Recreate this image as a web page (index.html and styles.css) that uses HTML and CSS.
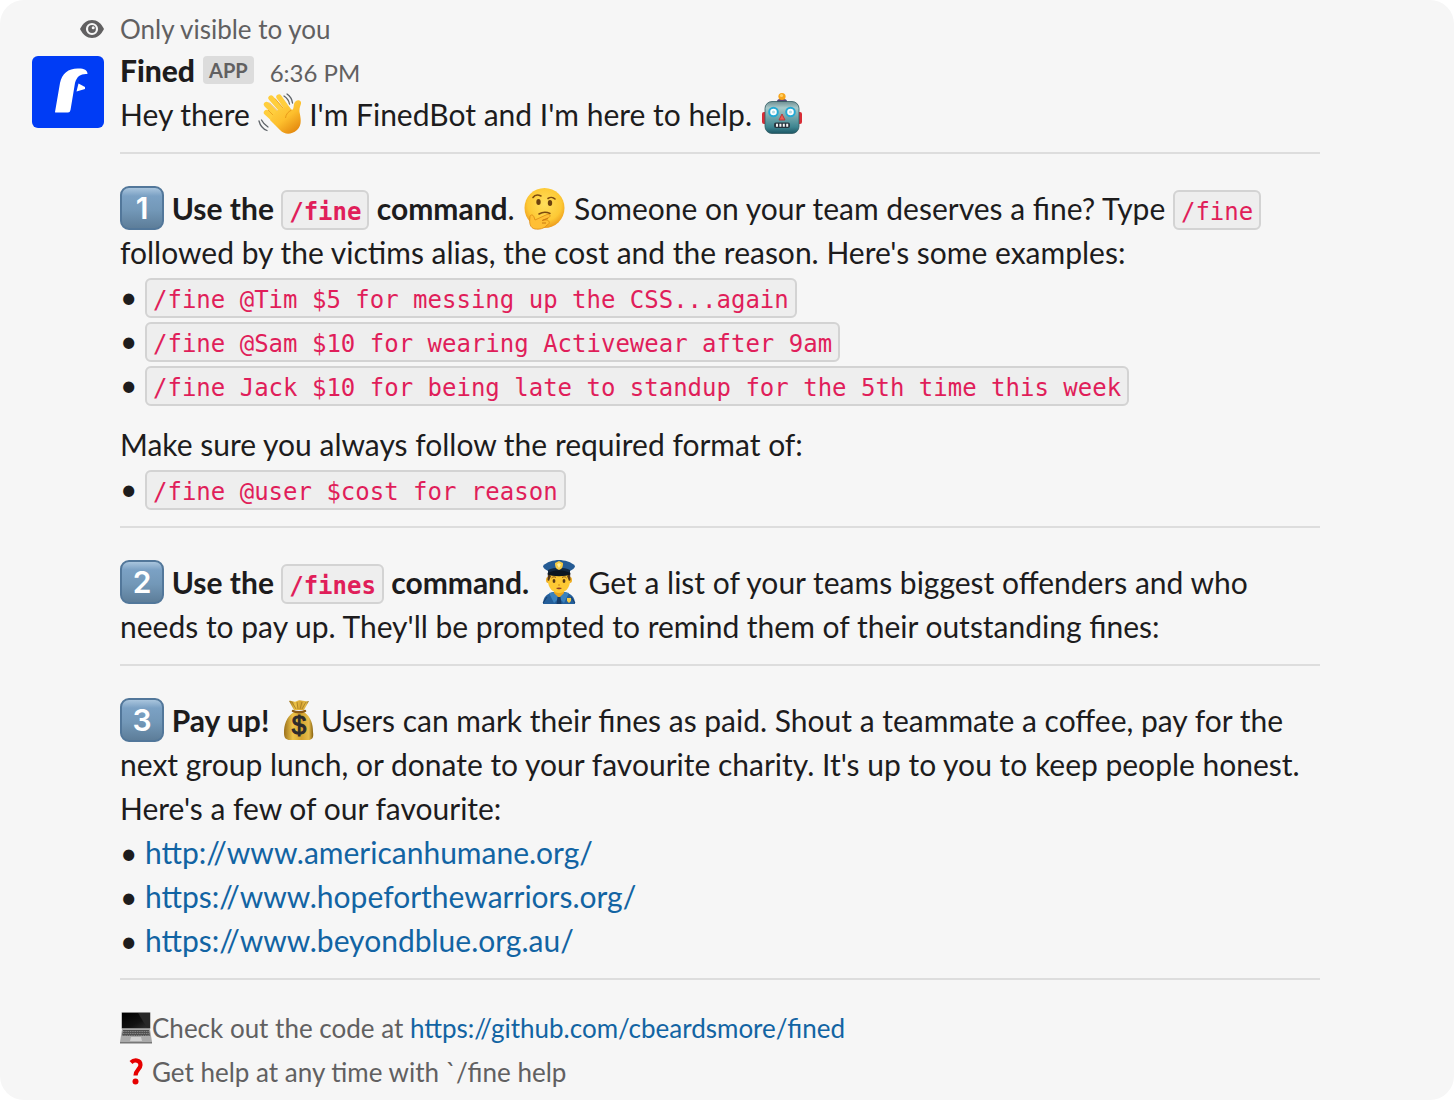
FILE: index.html
```html
<!DOCTYPE html>
<html lang="en">
<head>
<meta charset="utf-8">
<meta name="viewport" content="width=device-width, initial-scale=1">
<title>Fined</title>
<link rel="stylesheet" href="styles.css">
</head>
<body>
<article class="message">
  <div class="notice">
    <span class="notice-icon">
      <svg class="eye" viewBox="0 0 24 20" aria-hidden="true"><path d="M0 10C3 4 7 1 12 1s9 3 12 9c-3 6-7 9-12 9S3 16 0 10z" fill="#616061"/><circle cx="12" cy="10" r="5" fill="none" stroke="#f6f6f6" stroke-width="2.200"/><circle cx="13.200" cy="8.800" r="1.500" fill="#f6f6f6"/></svg>
    </span>
    <span>Only visible to you</span>
  </div>

  <div class="body">
    <svg class="avatar" viewBox="0 0 72 72" role="img" aria-label="Fined"><rect width="72" height="72" fill="#003cf5"/><path d="M23 56L28 27C30 17 37 12 47 12.500C52 12.500 55.500 14 55.500 18C49 17.500 45 20 43 27L38.500 54Q38 56.500 36 56.500H24Q23 56.500 23 56Z" fill="#fff"/><path d="M46.500 27.500L53 31V33L44.500 35.500Z" fill="#fff"/></svg>

    <div class="content">
      <header class="header">
        <span class="name">Fined</span>
        <span class="badge">APP</span>
        <time class="time">6:36 PM</time>
      </header>

      <p>Hey there <svg class="emoji" viewBox="0 0 44 44" role="img" aria-label="waving hand">
          <defs><linearGradient id="hand" x1="0" y1="0" x2=".7" y2="1"><stop offset="0" stop-color="#ffd84c"/><stop offset=".6" stop-color="#fdbf2d"/><stop offset="1" stop-color="#e58b10"/></linearGradient></defs>
          <g transform="translate(1 0)">
          <g stroke="#ffce3d" stroke-width="5.400" stroke-linecap="round"><path d="M8.500 20.500L21 32M8.500 12.500L23 27M13 6L27 22M21 5L31 19"/></g>
          <path d="M10 18L19 27M11 10.500L20 19.500M17 6.500L25 16" stroke="#e99a19" stroke-width=".8"/>
          <path d="M18 19L30 14L33.500 18C35.500 18 35.500 15 36 12C37 8 41.500 7 43 10C43.800 12 41 15 41.500 20C43 27 44 33 39 38C33 43 27 43 22 38L12 28Z" fill="url(#hand)"/>
          <path d="M33.500 18C30 20 28 22 27.500 26" fill="none" stroke="#e99a19" stroke-width="1"/>
          <g fill="none" stroke="#5f6469" stroke-width="1.300" stroke-linecap="round"><path d="M29 2C32 4 34 7 34.500 11M26 4C29 6 31 9 31.500 12M1 29C2 33 5 37 9 38.500M3.500 28C5 31 7 33 10 35"/></g>
          </g>
        </svg> I'm FinedBot and I'm here to help. <svg class="emoji" viewBox="0 0 44 44" role="img" aria-label="robot">
          <defs><linearGradient id="bot" x2="0" y2="1"><stop offset="0" stop-color="#6f8f93"/><stop offset=".2" stop-color="#a9c9c9"/><stop offset=".5" stop-color="#6fa5aa"/><stop offset=".8" stop-color="#3d8590"/><stop offset="1" stop-color="#1c5664"/></linearGradient></defs>
          <path d="M17 9C17 6 27 6 27 9V11H17Z" fill="#5c4678"/><circle cx="22" cy="4.500" r="3.600" fill="#f8a51b"/><circle cx="21.500" cy="3.500" r="1.600" fill="#ffd267"/>
          <rect x="2" y="20" width="5" height="12" rx="2" fill="#d92c35"/><rect x="37" y="20" width="5" height="12" rx="2" fill="#d92c35"/>
          <rect x="5" y="9.500" width="34" height="32" rx="7" fill="url(#bot)" stroke="#315b62" stroke-width=".8"/>
          <g fill="#fff" stroke="#24a9d4" stroke-width="2"><circle cx="13.500" cy="20" r="4.300"/><circle cx="30.500" cy="20" r="4.300"/></g><circle cx="13.500" cy="20" r="1.600" fill="#b6dce6"/><circle cx="30.500" cy="20" r="1.600" fill="#b6dce6"/>
          <path d="M22 22L25 28H19Z" fill="#ef5b51" stroke="#b43b3e"/>
          <rect x="14" y="30.500" width="16" height="5.500" rx="2" fill="#27343d"/><path d="M16 33.300H29" stroke="#f6f7f7" stroke-width="3" stroke-dasharray="2 1.400"/>
        </svg></p>

      <hr>

      <section>
        <p><span class="keycap">1</span> <b>Use the <code>/fine</code> command</b>. <svg class="emoji" viewBox="0 0 44 44" role="img" aria-label="thinking face">
            <defs><radialGradient id="face" cx=".5" cy=".4" r=".6"><stop offset="0" stop-color="#ffdf5c"/><stop offset=".7" stop-color="#fdc935"/><stop offset="1" stop-color="#ed9b1d"/></radialGradient></defs>
            <circle cx="22.500" cy="22" r="20" fill="url(#face)"/>
            <g fill="#6b400e"><ellipse cx="16.500" cy="16" rx="2.200" ry="3"/><ellipse cx="28" cy="17" rx="2.200" ry="3"/></g>
            <g fill="none" stroke="#7c4a10" stroke-linecap="round"><path d="M11 11.500C13 8.500 16 8.500 19 10" stroke-width="1.600"/><path d="M26 12.500C28 11 31 11 33 13" stroke-width="1.600"/><path d="M17 28C21 25.500 25 26 28 27.500" stroke-width="1.500"/></g>
            <path d="M8 31C8 28.500 11 28 12 31L13 34L25 28.500C28 27.500 29 30 27 31.500L21 34H25C28 35 28 38 25 39C22 43 17 43.500 13 43C8 42 7 37 8 31Z" fill="#ffbf35" stroke="#dc8b17" stroke-width=".8"/>
            <path d="M20 34.500L26 32.500M20 37H24" stroke="#c87812" stroke-width="1"/>
          </svg> Someone on your team deserves a fine? Type <code>/fine</code> followed by the victims alias, the cost and the reason. Here's some examples:</p>
        <ul>
          <li><code>/fine @Tim $5 for messing up the CSS...again</code></li>
          <li><code>/fine @Sam $10 for wearing Activewear after 9am</code></li>
          <li><code>/fine Jack $10 for being late to standup for the 5th time this week</code></li>
        </ul>
        <p class="spaced">Make sure you always follow the required format of:</p>
        <ul>
          <li><code>/fine @user $cost for reason</code></li>
        </ul>
      </section>

      <hr>

      <section>
        <p><span class="keycap">2</span> <b>Use the <code>/fines</code> command.</b> <svg class="emoji" viewBox="0 0 44 44" role="img" aria-label="police officer">
            <path d="M6 44C6 36 11 33 17 32H27C33 33 38 36 38 44Z" fill="#245f9b"/><path d="M17 30H27V34L22 38L17 34Z" fill="#e9a51b"/><path d="M16 32L22 38L17 43L12 33ZM28 32L22 38L27 43L32 33Z" fill="#3b82bd"/><path d="M20.500 37H23.500L24.500 44H19.500Z" fill="#173c68"/>
            <path d="M6 43L10 37M38 43L34 37" stroke="#173c68"/>
            <ellipse cx="11" cy="20" rx="2" ry="3" fill="#efae22"/><ellipse cx="33" cy="20" rx="2" ry="3" fill="#efae22"/>
            <path d="M11 12H33V21C33 28 28 33 22 33S11 28 11 21Z" fill="#fdc934"/><path d="M11 13L14 16L12 21L10.500 20ZM33 13L30 16L32 21L33.500 20Z" fill="#563718"/>
            <g fill="#583917"><ellipse cx="17" cy="21" rx="1.400" ry="2"/><ellipse cx="27" cy="21" rx="1.400" ry="2"/></g><path d="M14.500 18C16 16.500 18 16.500 19 17.500M25 17.500C26.500 16.500 28.500 16.500 29.500 18" fill="none" stroke="#8a5718"/><path d="M21 25H23" stroke="#d18c1b"/><path d="M19 28C20.500 27.300 23.500 27.300 25 28C23.500 29.800 20.500 29.800 19 28Z" fill="#8d4027"/>
            <path d="M6 6C9 2 17 0 22 0S35 2 38 6C38 8 35 10 33 11H11C9 10 6 8 6 6Z" fill="#255b94"/><path d="M11 10C17 7 27 7 33 10V15C27 12 17 12 11 15Z" fill="#13283f"/><path d="M10 14C16 9 28 9 34 14C29 17 15 17 10 14Z" fill="#0c1621"/><path d="M22 1L26 3C26 7 25 9 22 10C19 9 18 7 18 3Z" fill="#f6ca45"/><path d="M22 3L24 4.500L22 8L20 4.500Z" fill="#fff0a0"/><path d="M30 38H34V41L32 43L30 41Z" fill="#f5ca45"/>
          </svg> Get a list of your teams biggest offenders and who needs to pay up. They'll be prompted to remind them of their outstanding fines:</p>
      </section>

      <hr>

      <section>
        <p><span class="keycap">3</span> <b>Pay up!</b> <svg class="emoji" viewBox="0 0 44 44" role="img" aria-label="money bag">
            <defs><linearGradient id="bag"><stop offset="0" stop-color="#9b711c"/><stop offset=".3" stop-color="#edc348"/><stop offset=".6" stop-color="#d5a330"/><stop offset=".85" stop-color="#e6bd4c"/><stop offset="1" stop-color="#86600f"/></linearGradient></defs>
            <path d="M12 3C15 2 17 5 20 3S27 4 32 3L27 12H17Z" fill="url(#bag)"/><path d="M15 4L19 11M20 4L21 11M25 4L23 11M29 4L25 11" stroke="#a27822" stroke-width=".8"/>
            <path d="M17 14C9 19 7 27 7 35C7 40 9 42 13 42H31C35 42 37 40 36 34C36 26 34 19 27 14Z" fill="url(#bag)"/><path d="M16 13C19 14.500 25 14.500 28 13" fill="none" stroke="#8b5a17" stroke-width="2.500" stroke-linecap="round"/>
            <text class="dollar" x="22" y="36" text-anchor="middle">$</text>
          </svg>Users can mark their fines as paid. Shout a teammate a coffee, pay for the next group lunch, or donate to your favourite charity. It's up to you to keep people honest. Here's a few of our favourite:</p>
        <ul>
          <li><a href="http://www.americanhumane.org/">http://www.americanhumane.org/</a></li>
          <li><a href="https://www.hopeforthewarriors.org/">https://www.hopeforthewarriors.org/</a></li>
          <li><a href="https://www.beyondblue.org.au/">https://www.beyondblue.org.au/</a></li>
        </ul>
      </section>

      <hr>

      <footer class="context">
        <p><svg class="emoji-small" viewBox="0 0 32 32" role="img" aria-label="laptop">
            <defs><linearGradient id="screen" y2="1"><stop offset="0" stop-color="#000"/><stop offset=".6" stop-color="#111"/><stop offset="1" stop-color="#333"/></linearGradient></defs>
            <rect x="1.500" y="0" width="29" height="17" rx="1" fill="#8d8d8d"/><rect x="2" y="1" width="28" height="15" fill="url(#screen)"/><path d="M18 1H30V16H27Z" fill="#272727"/>
            <path d="M2 17H30L32 30H0Z" fill="#aaa"/><path d="M3 18H29L30 24H2Z" fill="#505050"/><path d="M3 19.500H29M3 21.500H29M2 23.500H30" stroke="#999" stroke-width=".7" stroke-dasharray="1.500 .8"/><path d="M11 25H21L22 29H10Z" fill="#d1d1d1"/><path d="M0 30H32V31.500H0Z" fill="#777"/>
          </svg>Check out the code at <a href="https://github.com/cbeardsmore/fined">https://github.com/cbeardsmore/fined</a></p>
        <p><svg class="emoji-small" viewBox="0 0 32 32" role="img" aria-label="question mark"><path d="M11 6.500C14 3.500 20.500 3.500 20.500 9C20.500 13 15.500 14 15.500 19.500" fill="none" stroke="#e60000" stroke-width="4.200"/><circle cx="15.500" cy="25.500" r="3" fill="#e60000"/></svg>Get help at any time with `/fine help</p>
      </footer>
    </div>
  </div>
</article>
</body>
</html>
```

FILE: styles.css
```css
* {
  box-sizing: border-box;
}

body {
  margin: 0;
  background: #fff;
  color: #1d1c1d;
  font: 30px/44px Lato, "Noto Sans", sans-serif;
}

p,
ul {
  margin: 0;
  padding: 0;
}

.message {
  padding: 10px 134px 6px 32px;
  border-radius: 24px;
  background: #f6f6f6;
}

.notice {
  display: flex;
  gap: 16px;
  color: #616061;
  font-size: 26px;
  line-height: 38px;
}

.notice-icon {
  display: flex;
  flex: none;
  align-items: center;
  justify-content: flex-end;
  width: 72px;
}

.eye {
  width: 24px;
  height: 20px;
}

.body {
  display: flex;
  align-items: flex-start;
  gap: 16px;
}

.avatar {
  flex: none;
  width: 72px;
  height: 72px;
  margin-top: 8px;
  border-radius: 6px;
}

.content {
  flex: 1;
  min-width: 0;
}

.header {
  display: flex;
  align-items: baseline;
}

.name {
  font-weight: 900;
}

.badge {
  align-self: flex-start;
  margin: 8px 16px 0 8px;
  padding: 0 6px;
  border-radius: 4px;
  background: #dcdcdc;
  color: #616061;
  font-size: 20px;
  font-weight: 700;
  line-height: 28px;
}

.time {
  color: #616061;
  font-size: 24px;
  line-height: 28px;
}

hr {
  height: 2px;
  margin: 16px 0 32px;
  border: 0;
  background: #dddddd;
}

.spaced {
  margin-top: 16px;
}

.emoji {
  width: 44px;
  height: 44px;
  vertical-align: top;
}

.emoji-small {
  width: 32px;
  height: 32px;
  margin: 6px 0;
  vertical-align: top;
}

.dollar {
  fill: #2d2b2c;
  stroke: #2d2b2c;
  font: 400 26px "Liberation Sans", sans-serif;
}

.keycap {
  display: inline-block;
  width: 44px;
  height: 44px;
  border: 2px solid #52779a;
  border-radius: 9px;
  background: linear-gradient(#a9c5dd, #7ba1c4 20%, #7398b8 55%, #5d7d99);
  color: #fff;
  font: 600 30px/40px Inter, sans-serif;
  text-align: center;
  vertical-align: top;
}

code {
  padding: 6px 6px 2px;
  border: 2px solid #d3d3d3;
  border-radius: 6px;
  background: #eeeeee;
  color: #e01e5a;
  font-family: "DejaVu Sans Mono", "Liberation Mono", monospace;
  font-size: 24px;
  line-height: 28px;
}

ul {
  list-style: none;
}

li::before {
  display: inline-block;
  width: 25px;
  content: "•";
}

a {
  color: #1264a3;
  text-decoration: none;
}

.context {
  margin-top: -6px;
  color: #616061;
  font-size: 26px;
}
```
